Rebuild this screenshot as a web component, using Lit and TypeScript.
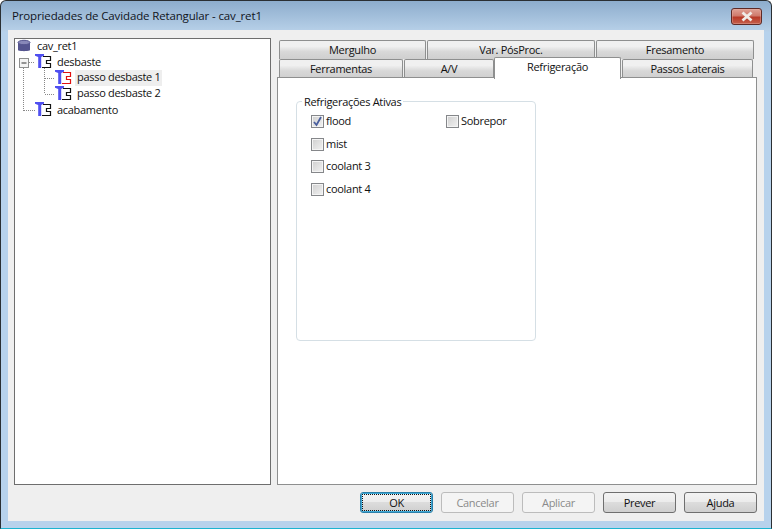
import { LitElement, html, css, svg } from "lit";
import { customElement } from "lit/decorators.js";

const opIcon = (c: string) => html`<svg class="ico" width="17" height="16" viewBox="0 0 17 16">
  <path d="M0 0H9V1.8L6.2 3V14H3.2V3L0 1.8Z" fill="#4f4ff0"/>
  <path d="M8 2.5H15.5V6.5H11.5V9.5H15.5V13.5H7" fill="none" stroke="${c}" stroke-width="1.2"/>
</svg>`;

@customElement("app-root")
export class AppRoot extends LitElement {
  static styles = css`
    :host { display: block; width: 772px; height: 529px; font-family: "Open Sans", "Noto Sans", sans-serif; font-size: 11px; letter-spacing: -0.3px; color: #111; }
    * { box-sizing: border-box; }
    .win { width: 772px; height: 529px; border: 1px solid #2a2f33; border-bottom-color: #1cb4d0; border-radius: 6px 6px 0 0; display: flex; flex-direction: column; padding: 0 7px 7px; overflow: hidden; background-image: linear-gradient(#8dadcd, #b7d0e8 30px, #b7d2ec 31px); }
    .title { height: 29px; flex: none; display: flex; align-items: center; justify-content: space-between; padding: 0 0 0 4px; font-size: 11.5px; letter-spacing: -0.14px; color: #10141c; }
    .close { width: 31px; height: 17px; margin-right: 2px; margin-top: 2px; border: 1px solid #5e2a26; border-radius: 3px; background: linear-gradient(#dfa195, #cf7a6c 45%, #b83a28 55%, #c5604c); display: flex; align-items: center; justify-content: center; box-shadow: inset 0 0 0 1px #e8b4aa66; }
    .body { flex: 1; background: #efefef; display: flex; flex-direction: column; padding: 8px 7px 8px 6px; min-height: 0; }
    .main { flex: none; height: 447px; display: flex; gap: 6px; }
    .tree { width: 257px; flex: none; background: #fff; border: 1px solid #6e6e6e; position: relative; }
    .lines { position: absolute; left: 0; top: 0; }
    .rows { display: flex; flex-direction: column; margin-top: -1px; }
    .row { height: 16px; display: flex; align-items: center; white-space: nowrap; }
    .txt { padding-bottom: 2px; }
    .ico { flex: none; margin-right: 5px; }
    .r0 { padding-left: 2px; }
    .r0 .ico { margin-right: 6px; }
    .r1 { padding-left: 20px; }
    .r2 { padding-left: 40px; }
    .r2 .lbl { padding: 0 2px; margin-left: -2px; height: 16px; line-height: 14px; }
    .sel { background: #eeeeee; }
    .right { flex: 1; display: flex; flex-direction: column; min-width: 0; }
    .tabrow { display: flex; height: 19px; flex: none; padding-left: 2px; }
    .tabs { flex: none; height: 39px; padding-top: 2px; display: flex; flex-direction: column; }
    .tab { flex: none; height: 19px; margin-right: 1px; padding-bottom: 2px; border: 1px solid #8e8f8f; border-bottom: none; background: linear-gradient(#f0f0f0, #f0f0f0 30%, #d8d8d8 60%, #cfcfcf); display: flex; align-items: center; justify-content: center; border-radius: 2px 2px 0 0; }
    .tab.active { height: 22px; margin-top: -2px; margin-left: -1px; background: #fff; z-index: 1; position: relative; padding-bottom: 4px; margin-bottom: -1px; }
    .panel { flex: 1; background: #fff; border: 1px solid #8e8f8f; padding: 23px 0 0 18px; }
    .group { width: 240px; height: 240px; border: 1px solid #d5dfe5; border-radius: 4px; position: relative; padding: 12px 0 0 14px; display: flex; }
    .legend { position: absolute; left: 5px; top: -7px; background: #fff; padding: 0 2px; height: 14px; line-height: 14px; }
    .col { display: flex; flex-direction: column; }
    .col.a { width: 135px; }
    .chk { height: 15px; margin-bottom: 7.7px; display: flex; align-items: center; gap: 2px; }
    .chk .t { margin-top: -2px; }
    .box { width: 13px; height: 13px; flex: none; border: 1px solid #85878a; background: linear-gradient(135deg, #cfcfcf, #f2f2f2); box-shadow: inset 0 0 0 1px #f4f4f4; display: block; }
    .box svg { display: block; }
    .foot { flex: 1; display: flex; justify-content: flex-end; align-items: flex-start; padding-top: 7px; gap: 8px; }
    .btn { width: 73px; height: 21px; padding-bottom: 1px; border: 1px solid #6f6f6f; border-radius: 3px; background: linear-gradient(#f3f3f3, #ececec 45%, #dcdcdc 50%, #cfcfcf); display: flex; align-items: center; justify-content: center; }
    .btn.def { border-color: #2c7fa8; box-shadow: inset 0 0 0 1px #3fa9d6; position: relative; }
    .btn.def::after { content: ""; position: absolute; inset: 1px; border: 1px dotted #111; }
    .btn.off { background: #f4f4f4; border-color: #bcbcbc; color: #8a8a8a; }
  `;

  private cb(label: string, checked = false) {
    return html`<div class="chk"><span class="box">${checked
      ? html`<svg width="11" height="11" viewBox="0 0 11 11"><path d="M2 6L4.5 9L9 1" fill="none" stroke="#4a5f9e" stroke-width="1.8"/></svg>`
      : ""}</span><span class="t">${label}</span></div>`;
  }

  render() {
    return html`<div class="win">
      <div class="title">
        <span>Propriedades de Cavidade Retangular - cav_ret1</span>
        <div class="close"><svg width="16" height="11" viewBox="0 0 16 11"><path d="M3.5 1.5L12.5 9.5M12.5 1.5L3.5 9.5" stroke="#f0ece8" stroke-width="2.8"/></svg></div>
      </div>
      <div class="body">
        <div class="main">
          <div class="tree">
            <svg class="lines" width="60" height="90" viewBox="0 0 60 90">
              ${svg`<g stroke="#888" stroke-dasharray="1 1" fill="none" shape-rendering="crispEdges">
                <path d="M8.5 29V72M14 23.5H20M8.5 71.5H20M29.5 29V55M30 39.5H40M30 55.5H40"/>
              </g>
              <rect x="4.5" y="19.5" width="9" height="9" fill="#f4f4f4" stroke="#8e8f8f"/>
              <path d="M6.5 24H11.5" stroke="#333" stroke-width="1" fill="none"/>`}
            </svg>
            <div class="rows">
              <div class="row r0">
                <svg class="ico" width="14" height="14" viewBox="0 0 14 14">
                  <path d="M1 3.5V11C1 12.5 13 12.5 13 11V3.5Z" fill="#55558f"/>
                  <ellipse cx="7" cy="3.5" rx="6" ry="2.2" fill="#8888b8" stroke="#55558f"/>
                </svg>
                <span class="txt">cav_ret1</span>
              </div>
              <div class="row r1">${opIcon("#111")}<span class="txt">desbaste</span></div>
              <div class="row r2">${opIcon("#e01010")}<span class="lbl sel">passo desbaste 1</span></div>
              <div class="row r2">${opIcon("#111")}<span class="lbl">passo desbaste 2</span></div>
              <div class="row r1">${opIcon("#111")}<span class="txt">acabamento</span></div>
            </div>
          </div>
          <div class="right">
            <div class="tabs">
              <div class="tabrow">
                <div class="tab" style="width:147px">Mergulho</div>
                <div class="tab" style="width:168px">Var. PósProc.</div>
                <div class="tab" style="width:158px">Fresamento</div>
              </div>
              <div class="tabrow">
                <div class="tab" style="width:124px">Ferramentas</div>
                <div class="tab" style="width:90px">A/V</div>
                <div class="tab active" style="width:127px">Refrigeração</div>
                <div class="tab" style="width:131px">Passos Laterais</div>
              </div>
            </div>
            <div class="panel">
              <div class="group">
                <div class="legend">Refrigerações Ativas</div>
                <div class="col a">
                  ${this.cb("flood", true)}
                  ${this.cb("mist")}
                  ${this.cb("coolant 3")}
                  ${this.cb("coolant 4")}
                </div>
                <div class="col">${this.cb("Sobrepor")}</div>
              </div>
            </div>
          </div>
        </div>
        <div class="foot">
          <div class="btn def">OK</div>
          <div class="btn off">Cancelar</div>
          <div class="btn off">Aplicar</div>
          <div class="btn">Prever</div>
          <div class="btn">Ajuda</div>
        </div>
      </div>
    </div>`;
  }
}
